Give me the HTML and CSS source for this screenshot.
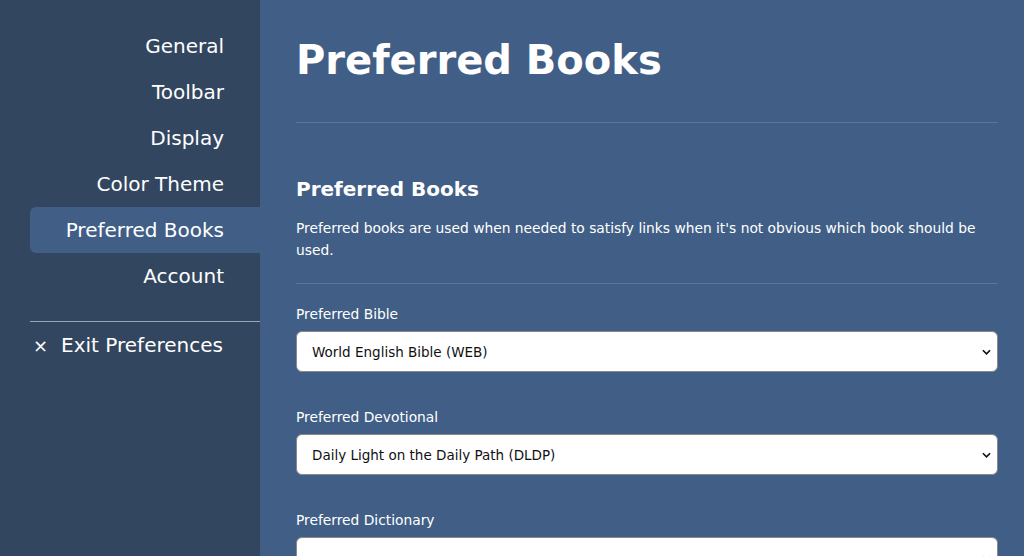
FILE: index.html
```html
<!DOCTYPE html>
<html lang="en">
<head>
<meta charset="utf-8">
<title>Preferences</title>
<link rel="stylesheet" href="styles.css">
</head>
<body>
<div class="app">
  <nav class="sidebar">
    <ul class="nav-list">
      <li class="nav-item">General</li>
      <li class="nav-item">Toolbar</li>
      <li class="nav-item">Display</li>
      <li class="nav-item">Color Theme</li>
      <li class="nav-item active">Preferred Books</li>
      <li class="nav-item">Account</li>
    </ul>
    <div class="nav-divider"></div>
    <div class="nav-exit"><span class="x">×</span><span>Exit Preferences</span></div>
  </nav>
  <main class="content">
    <h1 class="title">Preferred Books</h1>
    <hr class="rule rule-top">
    <h2 class="section">Preferred Books</h2>
    <p class="desc">Preferred books are used when needed to satisfy links when it's not obvious which book should be used.</p>
    <hr class="rule rule-mid">
    <div class="field">
      <label class="label">Preferred Bible</label>
      <div class="select"><span>World English Bible (WEB)</span><svg class="chev" viewBox="0 0 10 6" width="9" height="6"><path d="M1 1 L5 5 L9 1" fill="none" stroke="#111" stroke-width="1.8"/></svg></div>
    </div>
    <div class="field">
      <label class="label">Preferred Devotional</label>
      <div class="select"><span>Daily Light on the Daily Path (DLDP)</span><svg class="chev" viewBox="0 0 10 6" width="9" height="6"><path d="M1 1 L5 5 L9 1" fill="none" stroke="#111" stroke-width="1.8"/></svg></div>
    </div>
    <div class="field">
      <label class="label">Preferred Dictionary</label>
      <div class="select"><span></span><svg class="chev" viewBox="0 0 10 6" width="9" height="6"><path d="M1 1 L5 5 L9 1" fill="none" stroke="#111" stroke-width="1.8"/></svg></div>
    </div>
  </main>
</div>
</body>
</html>
```
FILE: styles.css
```css
html, body {
  margin: 0;
  padding: 0;
  height: 100%;
  overflow: hidden;
}
body {
  font-family: "DejaVu Sans", "Liberation Sans", sans-serif;
  color: #fff;
  background: #415f86;
}
.app {
  display: flex;
  height: 556px;
  overflow: hidden;
}
.sidebar {
  width: 230px;
  padding: 23px 0 0 30px;
  background: #33465f;
  flex-shrink: 0;
}
.nav-list {
  list-style: none;
  margin: 0;
  padding: 0;
}
.nav-item {
  height: 46px;
  line-height: 46px;
  text-align: right;
  padding-right: 36px;
  font-size: 20px;
  border-radius: 6px 0 0 6px;
}
.nav-item.active {
  background: #415f86;
}
.nav-divider {
  height: 1px;
  background: #9aa6b6;
  margin-top: 22px;
}
.nav-exit {
  display: flex;
  align-items: center;
  gap: 13px;
  height: 46px;
  font-size: 20px;
  padding-left: 3px;
}
.nav-exit .x {
  font-size: 18px;
}
.content {
  flex: 1;
  padding: 0 26px 0 36px;
  overflow: hidden;
}
.title {
  margin: 30px 0 0;
  font-size: 40px;
  line-height: 60px;
  font-weight: bold;
}
.rule {
  border: 0;
  height: 1px;
  background: rgba(255,255,255,0.15);
  margin: 0;
}
.rule-top {
  margin-top: 32px;
}
.section {
  margin: 52px 0 0;
  font-size: 20px;
  line-height: 28px;
  font-weight: bold;
}
.desc {
  margin: 14px 0 0;
  font-size: 13.8px;
  line-height: 22px;
}
.rule-mid {
  margin-top: 22px;
}
.field {
  margin-bottom: 35px;
}
.field:first-of-type {
  padding-top: 20px;
}
.label {
  display: block;
  font-size: 13.8px;
  line-height: 20px;
}
.select {
  margin-top: 7px;
  height: 39px;
  border: 1px solid #8a8a8a;
  border-radius: 6px;
  background: #fff;
  color: #111;
  display: flex;
  align-items: center;
  justify-content: space-between;
  padding: 0 6px 0 15px;
  font-size: 13.5px;
}
```
